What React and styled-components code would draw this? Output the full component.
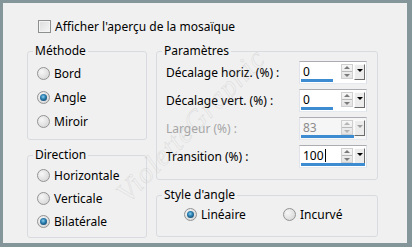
import React from "react";
import styled, { createGlobalStyle } from "styled-components";

const GlobalStyle = createGlobalStyle`
  html, body {
    margin: 0;
    padding: 0;
    background: #84969a;
  }
  body {
    font-family: "Noto Sans", "Open Sans", "DejaVu Sans", sans-serif;
    font-size: 12px;
    color: #000;
  }
`;

const Frame = styled.div`
  position: relative;
  width: 412px;
  height: 247px;
  box-sizing: border-box;
  border-style: solid;
  border-color: #84969a;
  border-width: 3px 5px 4px 3px;
  background: #f0f0f0;
  padding: 17px 0 0 24px;
  overflow: hidden;
`;

const CheckRow = styled.label`
  display: flex;
  align-items: center;
  gap: 4px;
  height: 13px;
  margin-left: 11px;
`;

const CheckBox = styled.span`
  width: 13px;
  height: 13px;
  box-sizing: border-box;
  border: 1px solid #8e8f8f;
  background: linear-gradient(135deg, #dcdcdc, #f6f6f6);
  box-shadow: inset 0 0 0 1px #f4f4f4;
`;

const Columns = styled.div`
  display: flex;
  gap: 9px;
  margin-top: 10px;
`;

const Column = styled.div`
  display: flex;
  flex-direction: column;
  gap: 7px;
  width: ${(p) => p.$width}px;
`;

const Group = styled.fieldset`
  margin: 0;
  min-width: 0;
  box-sizing: border-box;
  height: ${(p) => p.$height}px;
  padding: ${(p) => p.$padTop}px ${(p) => p.$padRight || 0}px 0 ${(p) => p.$padLeft}px;
  border: 1px solid #d8dce0;
  border-radius: 3px;
  display: flex;
  flex-direction: column;
  gap: ${(p) => p.$gap || 0}px;
`;

const Legend = styled.legend`
  padding: 0 2px;
  margin-left: ${(p) => 5 - p.$padLeft}px;
  line-height: 16px;
  font-size: 12px;
`;

const RadioItem = styled.label`
  display: flex;
  align-items: center;
  gap: 4px;
  height: 23px;
  white-space: nowrap;
`;

const RadioCircle = styled.span`
  position: relative;
  width: 13px;
  height: 13px;
  box-sizing: border-box;
  border-radius: 50%;
  border: 1px solid #939393;
  background: radial-gradient(circle at 35% 35%, #f7f7f7, #d0d0d0);
  flex: none;

  &::after {
    content: "";
    display: ${(p) => (p.$checked ? "block" : "none")};
    position: absolute;
    left: 2px;
    top: 2px;
    width: 7px;
    height: 7px;
    border-radius: 50%;
    background: radial-gradient(circle at 45% 40%, #8fd0ee 0, #2a7fb0 40%, #0c2f52 100%);
  }
`;

const RadioLine = styled.div`
  display: grid;
  grid-template-columns: 99px auto;
`;

const ParamRow = styled.div`
  display: flex;
  align-items: center;
  height: 23px;
`;

const ParamLabel = styled.span`
  flex: 1;
  color: ${(p) => (p.$disabled ? "#a6a6a6" : "#000")};
  white-space: nowrap;
`;

const SpinBox = styled.div`
  width: 68px;
  height: 23px;
  box-sizing: border-box;
  border: 1px solid #abadb3;
  border-color: #abadb3 #dbdfe6 #e3e9ef #e2e3ea;
  background: ${(p) => (p.$disabled ? "#f6f6f6" : "#fff")};
  padding: 2px 1px 1px 1px;
  display: flex;
  flex-direction: column;
`;

const SpinTop = styled.div`
  display: flex;
  align-items: center;
  height: 15px;
`;

const SpinValue = styled.span`
  flex: 1;
  padding-left: 2px;
  font-size: 12px;
  line-height: 15px;
  color: ${(p) => (p.$disabled ? "#8c8c8c" : "#000")};
  display: flex;
  align-items: center;
`;

const Caret = styled.span`
  width: 1px;
  height: 13px;
  background: #000;
  margin-left: 1px;
`;

const UpDown = styled.span`
  width: 12px;
  height: 15px;
  box-sizing: border-box;
  border: 1px solid #cfcfcf;
  background: linear-gradient(#f7f7f7, #e3e3e3);
  display: flex;
  flex-direction: column;
  align-items: center;
  justify-content: space-around;
  margin-right: 1px;
`;

const UpDownDivider = styled.span`
  width: 10px;
  height: 1px;
  background: #b9b9b9;
`;

const Tri = styled.span`
  width: 0;
  height: 0;
  border-left: 3px solid transparent;
  border-right: 3px solid transparent;
  ${(p) =>
    p.$up
      ? `border-bottom: 3px solid ${p.$color};`
      : `border-top: 3px solid ${p.$color};`}
`;

const DropButton = styled.span`
  width: 11px;
  height: 16px;
  box-sizing: border-box;
  border-style: solid;
  border-width: 1px;
  border-color: #fafafa #6c6c6c #6c6c6c #fafafa;
  background: #ececec;
  display: flex;
  justify-content: center;
  padding-top: 4px;
  align-self: flex-start;
`;

const Track = styled.div`
  height: 3px;
`;

const Fill = styled.div`
  height: 3px;
  background: #3d8bd1;
`;

const Watermark = styled.div`
  position: absolute;
  left: 88px;
  top: 106px;
  transform: rotate(-46deg);
  font-family: "Liberation Serif", serif;
  font-style: italic;
  font-size: 29px;
  letter-spacing: 1px;
  color: transparent;
  -webkit-text-stroke: 0.5px rgba(175, 175, 175, 0.35);
  pointer-events: none;
  white-space: nowrap;
`;

function Radio({ label, checked }) {
  return (
    <RadioItem>
      <RadioCircle $checked={checked} />
      {label}
    </RadioItem>
  );
}

function Spin({ value, fill, disabled, caret }) {
  const arrow = disabled ? "#b4b4b4" : "#7a7a7a";
  return (
    <SpinBox $disabled={disabled}>
      <SpinTop>
        <SpinValue $disabled={disabled}>
          {value}
          {caret && <Caret />}
        </SpinValue>
        <UpDown>
          <Tri $up $color={arrow} />
          <UpDownDivider />
          <Tri $color={arrow} />
        </UpDown>
        <DropButton>
          <Tri $color={disabled ? "#a0a0a0" : "#000"} />
        </DropButton>
      </SpinTop>
      <Track>
        <Fill style={{ width: `${fill}%` }} />
      </Track>
    </SpinBox>
  );
}

const params = [
  { label: "Décalage horiz. (%) :", value: "0", fill: 50 },
  { label: "Décalage vert. (%) :", value: "0", fill: 50 },
  { label: "Largeur (%) :", value: "83", fill: 83, disabled: true },
  { label: "Transition (%) :", value: "100", fill: 100, caret: true },
];

export default function App() {
  return (
    <>
      <GlobalStyle />
      <Frame>
        <CheckRow>
          <CheckBox />
          Afficher l'aperçu de la mosaïque
        </CheckRow>
        <Columns>
          <Column $width={120}>
            <Group $height={97} $padTop={3} $padLeft={9} $gap={1}>
              <Legend $padLeft={9}>Méthode</Legend>
              <Radio label="Bord" />
              <Radio label="Angle" checked />
              <Radio label="Miroir" />
            </Group>
            <Group $height={91} $padTop={1} $padLeft={9}>
              <Legend $padLeft={9}>Direction</Legend>
              <Radio label="Horizontale" />
              <Radio label="Verticale" />
              <Radio label="Bilatérale" checked />
            </Group>
          </Column>
          <Column $width={222}>
            <Group $height={137} $padTop={2} $padRight={10} $padLeft={9} $gap={5}>
              <Legend $padLeft={9}>Paramètres</Legend>
              {params.map((p) => (
                <ParamRow key={p.label}>
                  <ParamLabel $disabled={p.disabled}>{p.label}</ParamLabel>
                  <Spin {...p} />
                </ParamRow>
              ))}
            </Group>
            <Group $height={50} $padTop={0} $padLeft={27}>
              <Legend $padLeft={27}>Style d'angle</Legend>
              <RadioLine>
                <Radio label="Linéaire" checked />
                <Radio label="Incurvé" />
              </RadioLine>
            </Group>
          </Column>
        </Columns>
        <Watermark>VioletteGraphic</Watermark>
      </Frame>
    </>
  );
}
